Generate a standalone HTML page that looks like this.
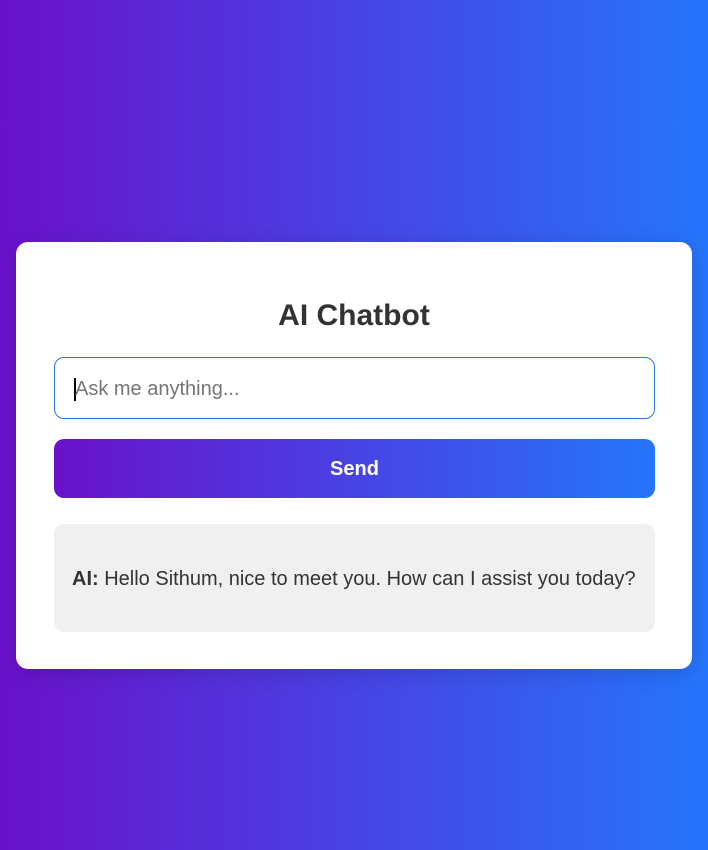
<!DOCTYPE html>
<html><head><meta charset="utf-8"><style>
html,body{margin:0;padding:0;width:708px;height:850px;overflow:hidden}
body{background:linear-gradient(to right,#6a11cb,#2575fc);font-family:"Liberation Sans",Arial,sans-serif;color:#333;position:relative}
.card{position:absolute;left:16px;top:242px;width:676px;height:427px;background:#fff;border-radius:12px;box-shadow:0 4px 20px rgba(0,0,0,0.15)}
h1{position:absolute;left:0;right:0;top:297px;margin:0;text-align:center;font-size:30px;font-weight:bold;line-height:37px;color:#333}
.input{position:absolute;left:54px;top:357px;width:599px;height:60px;border:1px solid #2d72e6;border-radius:10px;box-sizing:content-box}
.input span{position:absolute;left:20px;top:20px;font-size:20px;color:#757575;line-height:23px}
.caret{position:absolute;left:19px;top:20px;width:2px;height:23px;background:#000}
.btn{position:absolute;left:54px;top:439px;width:601px;height:59px;border-radius:10px;background:linear-gradient(to right,#6a11cb,#2575fc);color:#fff;font-weight:bold;font-size:20px;text-align:center;line-height:60px}
.resp{position:absolute;left:54px;top:524px;width:601px;height:108px;border-radius:10px;background:#f0f0f0;font-size:20px;line-height:110px;box-sizing:border-box;padding-left:18px;white-space:nowrap}
</style></head><body>
<div class="card"></div>
<h1>AI Chatbot</h1>
<div class="input"><div class="caret"></div><span>Ask me anything...</span></div>
<div class="btn">Send</div>
<div class="resp"><b>AI:</b> Hello Sithum, nice to meet you. How can I assist you today?</div>
</body></html>
